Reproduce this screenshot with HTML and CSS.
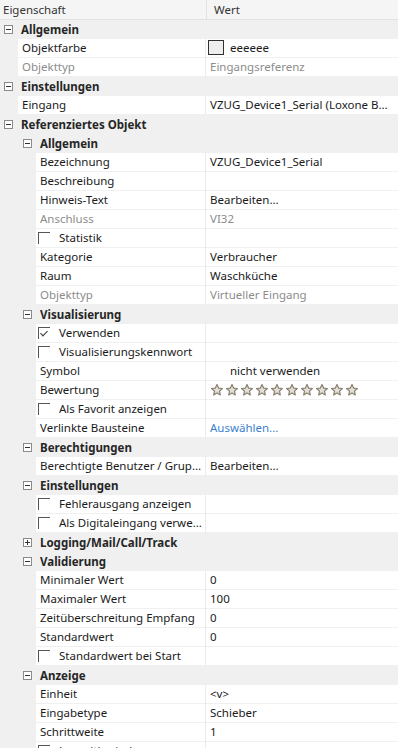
FILE: index.html
```
<!DOCTYPE html>
<html lang="de">
<head>
  <meta charset="UTF-8" />
  <meta name="viewport" content="width=device-width, initial-scale=1.0" />
  <title>Eigenschaften</title>
  <link rel="stylesheet" href="styles.css">
</head>
<body>
  <div class="grid">
    <div class="head">
      <div class="head-name">Eigenschaft</div>
      <div class="head-value">Wert</div>
    </div>

    <!-- Allgemein -->
    <div class="row cat l0"><span class="exp"></span><span class="cat-name">Allgemein</span></div>
    <div class="row prop l0"><div class="name">Objektfarbe</div><div class="value"><span class="swatch"></span>eeeeee</div></div>
    <div class="row prop l0 off"><div class="name">Objekttyp</div><div class="value">Eingangsreferenz</div></div>

    <!-- Einstellungen -->
    <div class="row cat l0"><span class="exp"></span><span class="cat-name">Einstellungen</span></div>
    <div class="row prop l0"><div class="name">Eingang</div><div class="value">VZUG_Device1_Serial (Loxone Bus)</div></div>

    <!-- Referenziertes Objekt -->
    <div class="row cat l0"><span class="exp"></span><span class="cat-name">Referenziertes Objekt</span></div>

    <div class="row cat l1"><span class="exp"></span><span class="cat-name">Allgemein</span></div>
    <div class="row prop l1"><div class="name">Bezeichnung</div><div class="value">VZUG_Device1_Serial</div></div>
    <div class="row prop l1"><div class="name">Beschreibung</div><div class="value"></div></div>
    <div class="row prop l1"><div class="name">Hinweis-Text</div><div class="value">Bearbeiten...</div></div>
    <div class="row prop l1 off"><div class="name">Anschluss</div><div class="value">VI32</div></div>
    <div class="row prop l1"><div class="name"><span class="check"></span>Statistik</div><div class="value"></div></div>
    <div class="row prop l1"><div class="name">Kategorie</div><div class="value">Verbraucher</div></div>
    <div class="row prop l1"><div class="name">Raum</div><div class="value">Waschküche</div></div>
    <div class="row prop l1 off"><div class="name">Objekttyp</div><div class="value">Virtueller Eingang</div></div>

    <div class="row cat l1"><span class="exp"></span><span class="cat-name">Visualisierung</span></div>
    <div class="row prop l1"><div class="name"><span class="check on"></span>Verwenden</div><div class="value"></div></div>
    <div class="row prop l1"><div class="name"><span class="check"></span>Visualisierungskennwort</div><div class="value"></div></div>
    <div class="row prop l1"><div class="name">Symbol</div><div class="value symbol">nicht verwenden</div></div>
    <div class="row prop l1"><div class="name">Bewertung</div><div class="value stars" id="stars"></div></div>
    <div class="row prop l1"><div class="name"><span class="check"></span>Als Favorit anzeigen</div><div class="value"></div></div>
    <div class="row prop l1"><div class="name">Verlinkte Bausteine</div><div class="value link">Auswählen...</div></div>

    <div class="row cat l1"><span class="exp"></span><span class="cat-name">Berechtigungen</span></div>
    <div class="row prop l1"><div class="name">Berechtigte Benutzer / Gruppen</div><div class="value">Bearbeiten...</div></div>

    <div class="row cat l1"><span class="exp"></span><span class="cat-name">Einstellungen</span></div>
    <div class="row prop l1"><div class="name"><span class="check"></span>Fehlerausgang anzeigen</div><div class="value"></div></div>
    <div class="row prop l1"><div class="name"><span class="check"></span>Als Digitaleingang verwenden</div><div class="value"></div></div>

    <div class="row cat l1"><span class="exp plus"></span><span class="cat-name">Logging/Mail/Call/Track</span></div>

    <div class="row cat l1"><span class="exp"></span><span class="cat-name">Validierung</span></div>
    <div class="row prop l1"><div class="name">Minimaler Wert</div><div class="value">0</div></div>
    <div class="row prop l1"><div class="name">Maximaler Wert</div><div class="value">100</div></div>
    <div class="row prop l1"><div class="name">Zeitüberschreitung Empfang</div><div class="value">0</div></div>
    <div class="row prop l1"><div class="name">Standardwert</div><div class="value">0</div></div>
    <div class="row prop l1"><div class="name"><span class="check"></span>Standardwert bei Start</div><div class="value"></div></div>

    <div class="row cat l1"><span class="exp"></span><span class="cat-name">Anzeige</span></div>
    <div class="row prop l1"><div class="name">Einheit</div><div class="value">&lt;v&gt;</div></div>
    <div class="row prop l1"><div class="name">Eingabetype</div><div class="value">Schieber</div></div>
    <div class="row prop l1"><div class="name">Schrittweite</div><div class="value">1</div></div>
    <div class="row prop l1"><div class="name"><span class="check"></span>Logarithmisch</div><div class="value"></div></div>
  </div>

  <script>
    // --- Rating stars ---
    const stars = document.getElementById('stars');
    const star = '<svg class="star" viewBox="0 0 12 12" width="12" height="12">' +
      '<polygon points="6,0.6 7.6,4.1 11.4,4.5 8.5,7.1 9.3,11 6,9 2.7,11 3.5,7.1 0.6,4.5 4.4,4.1" ' +
      'fill="#e2dfd6" stroke="#877f6e" stroke-width="1.2" stroke-linejoin="round"/></svg>';
    for (let i = 0; i < 10; i++) {
      stars.insertAdjacentHTML('beforeend', star);
    }
  </script>
</body>
</html>
```
FILE: styles.css
```
html, body {
  margin: 0;
  padding: 0;
}

body {
  width: 398px;
  height: 748px;
  overflow: hidden;
  background-color: #f0f0f0;
  font-family: "Noto Sans", "Open Sans", sans-serif;
  font-size: 11.5px;
  color: #1a1a1a;
}

.grid {
  display: flex;
  flex-direction: column;
}

/* Header */
.head {
  display: flex;
  height: 19px;
  border-bottom: 1px solid #e2e2e2;
  background-color: #f5f5f5;
  line-height: 19px;
  color: #333;
}

.head-name {
  width: 203px;
  padding-left: 3px;
  border-right: 1px solid #e2e2e2;
}

.head-value {
  padding-left: 7px;
}

/* Rows */
.row {
  display: flex;
  align-items: center;
  height: 19px;
  line-height: 18px;
  white-space: nowrap;
}

.cat {
  background-color: #f0f0f0;
}

.cat.l0 {
  padding-left: 4px;
}

.cat.l1 {
  padding-left: 23px;
}

.cat-name {
  font-weight: bold;
  color: #262626;
  margin-left: 8px;
}

.exp {
  position: relative;
  width: 7px;
  height: 7px;
  border: 1px solid #8a8a8a;
  background-color: #fff;
  flex-shrink: 0;
}

.exp::before {
  content: "";
  position: absolute;
  left: 1px;
  top: 3px;
  width: 5px;
  height: 1px;
  background-color: #333;
}

.exp.plus::after {
  content: "";
  position: absolute;
  left: 3px;
  top: 1px;
  width: 1px;
  height: 5px;
  background-color: #333;
}

.prop.l0 {
  padding-left: 18px;
}

.prop.l1 {
  padding-left: 36px;
}

.name,
.value {
  height: 18px;
  border-bottom: 1px solid #f0f0f0;
  background-color: #ffffff;
  overflow: hidden;
  text-overflow: ellipsis;
}

.name {
  flex-shrink: 0;
  padding-left: 4px;
  padding-right: 2px;
  border-right: 1px solid #ebebeb;
}

.l0 .name {
  width: 181px;
}

.l1 .name {
  width: 163px;
}

.value {
  flex: 1;
  min-width: 0;
  padding-left: 4px;
  padding-right: 4px;
}

.off .name,
.off .value {
  color: #8c8c8c;
}

.link {
  color: #3c7fd0;
}

.symbol {
  padding-left: 24px;
}

/* Color swatch */
.swatch {
  display: inline-block;
  vertical-align: middle;
  width: 14px;
  height: 13px;
  margin: -3px 6px 0 -2px;
  border: 1px solid #303030;
  background-color: #eeeeee;
}

/* Checkbox, only the top and left edges show */
.check {
  position: relative;
  display: inline-block;
  vertical-align: middle;
  width: 11px;
  height: 11px;
  margin: -1px 9px 0 -2px;
  border-top: 1px solid #555;
  border-left: 1px solid #555;
}

.check.on::after {
  content: "";
  position: absolute;
  left: 3px;
  top: 1px;
  width: 3px;
  height: 6px;
  border-right: 1.4px solid #333;
  border-bottom: 1.4px solid #333;
  transform: rotate(45deg);
}

/* Rating */
.stars {
  display: flex;
  align-items: center;
  gap: 3px;
  padding-left: 5px;
}

.star {
  display: block;
}
```
